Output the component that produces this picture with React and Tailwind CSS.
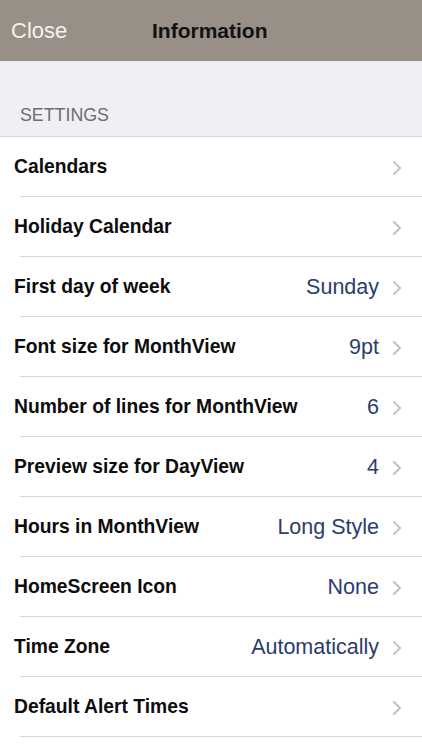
const rows = [
  { label: "Calendars" },
  { label: "Holiday Calendar" },
  { label: "First day of week", value: "Sunday" },
  { label: "Font size for MonthView", value: "9pt" },
  { label: "Number of lines for MonthView", value: "6" },
  { label: "Preview size for DayView", value: "4" },
  { label: "Hours in MonthView", value: "Long Style" },
  { label: "HomeScreen Icon", value: "None" },
  { label: "Time Zone", value: "Automatically" },
  { label: "Default Alert Times" },
];

function Chevron() {
  return (
    <svg width="10" height="16" viewBox="0 0 10 16" className="ml-[13px] shrink-0">
      <path d="M2 2l6 6-6 6" fill="none" stroke="#c4c4c9" strokeWidth="2.2" strokeLinecap="round" strokeLinejoin="round" />
    </svg>
  );
}

export default function App() {
  return (
    <div className="h-[750px] w-[422px] overflow-hidden bg-white font-['Liberation_Sans',Arial,sans-serif]">
      <header className="relative flex h-[61px] items-center bg-[#988f86]">
        <span className="pl-[11px] text-[22px] text-[#f4f2ef]">Close</span>
        <h1 className="absolute left-[152px] text-[21px] font-bold text-[#111]">Information</h1>
      </header>
      <div className="flex h-[75px] items-end bg-[#efeff4] pb-[7px] pl-[20px] text-[17.8px] text-[#6d6d72]">
        SETTINGS
      </div>
      <div className="border-t border-[#d6d6da]">
        {rows.map((row) => (
          <div key={row.label} className="pl-[14px]">
            <div className="flex h-[59px] items-center pr-[20px] pt-[2px]">
              <span className="flex-1 text-[19.3px] font-bold text-[#0d0d0d]">{row.label}</span>
              {row.value && <span className="text-[21.5px] text-[#2b3d6b]">{row.value}</span>}
              <Chevron />
            </div>
            <div className="ml-[6px] h-px bg-[#d6d6da]" />
          </div>
        ))}
      </div>
    </div>
  );
}
